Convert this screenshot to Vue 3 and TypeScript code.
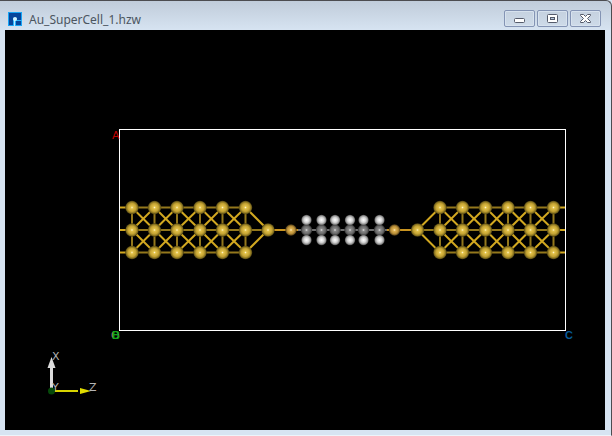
<script setup lang="ts">
interface Point { x: number; y: number }
interface Bond { from: Point; to: Point; tone: string }
interface Atom extends Point { r: number; kind: string }

const title = 'Au_SuperCell_1.hzw'
const rows = [207.5, 230, 252.5]
const blocks = [
  [132, 154.5, 177, 200, 222.5, 245.5],
  [440, 462.5, 485.5, 508, 530.5, 553.5],
]
const chain = [306.5, 321.5, 335, 350, 363.5, 379.5]

const bonds: Bond[] = []
const link = (x1: number, y1: number, x2: number, y2: number, tone: string) =>
  bonds.push({ from: { x: x1, y: y1 }, to: { x: x2, y: y2 }, tone })

for (const columns of blocks) {
  for (let i = 0; i < columns.length; i++) {
    const x = columns[i]
    link(x, rows[0], x, rows[2], 'dark')
    if (i === columns.length - 1) continue
    const next = columns[i + 1]
    for (const y of rows) link(x, y, next, y, 'dark')
    for (let r = 0; r < 2; r++) {
      link(x, rows[r], next, rows[r + 1], 'bright')
      link(x, rows[r + 1], next, rows[r], 'bright')
    }
  }
}
for (const y of rows) {
  link(120, y, 132, y, 'bright')
  link(553.5, y, 565, y, 'bright')
}
for (const y of [rows[0], rows[2]]) {
  link(245.5, y, 268, 230, 'bright')
  link(440, y, 417.5, 230, 'bright')
}
link(245.5, 230, 268, 230, 'dark')
link(417.5, 230, 440, 230, 'dark')
link(268, 230, 298, 230, 'amber')
link(387, 230, 417.5, 230, 'amber')
link(298, 230, 387, 230, 'grey')
for (const x of chain) link(x, 220, x, 240, 'pale')

const atoms: Atom[] = [
  ...blocks.flatMap((columns) =>
    columns.flatMap((x) => rows.map((y) => ({ x, y, r: 6.7, kind: 'gold' }))),
  ),
  { x: 268, y: 230, r: 6.7, kind: 'gold' },
  { x: 417.5, y: 230, r: 6.7, kind: 'gold' },
  { x: 291, y: 230, r: 5.7, kind: 'sulfur' },
  { x: 394.5, y: 230, r: 5.7, kind: 'sulfur' },
  ...chain.map((x) => ({ x, y: 230, r: 5.7, kind: 'carbon' })),
  ...chain.flatMap((x) => [220, 240].map((y) => ({ x, y, r: 5.2, kind: 'hydrogen' }))),
]
</script>

<template>
  <main class="window">
    <header class="titlebar">
      <svg class="logo" viewBox="0 0 14 14" aria-hidden="true">
        <rect width="14" height="14" fill="#18a5f5" />
        <rect x="1" y="1" width="12" height="12" fill="#07469b" />
        <path d="M5 14V6h4v2h5v1H8v5z" fill="#28b3fb" />
        <path d="M6 14V8h1v6z" fill="#bfeaff" />
        <circle cx="7" cy="7" r="2" fill="#d4f5ff" />
      </svg>
      <h1 class="title">{{ title }}</h1>
      <div class="controls">
        <button type="button" class="control" aria-label="Minimize">
          <svg viewBox="0 0 15 11" aria-hidden="true">
            <rect x="2.5" y="5.5" width="10" height="4" rx="1" fill="#fff" stroke="#555b6b" />
          </svg>
        </button>
        <button type="button" class="control" aria-label="Maximize">
          <svg viewBox="0 0 15 11" aria-hidden="true">
            <rect x="2.5" y="1.5" width="10" height="8" rx="1" fill="#fff" stroke="#555b6b" />
            <rect x="5.5" y="4.5" width="4" height="2" fill="#b8c8dd" stroke="#555b6b" />
          </svg>
        </button>
        <button type="button" class="control" aria-label="Close">
          <svg viewBox="0 0 15 11" aria-hidden="true">
            <path
              d="M2.5 1.5h3l2 2 2-2h3v1l-3 3 3 3v1h-3l-2-2-2 2h-3v-1l3-3-3-3z"
              fill="#fff" stroke="#555b6b" stroke-linejoin="round"
            />
          </svg>
        </button>
      </div>
    </header>

    <section class="viewport">
      <svg class="scene" viewBox="5 30 600 400" role="img" aria-label="Molecular junction">
        <defs>
          <radialGradient id="gold">
            <stop offset="0" stop-color="#fff4cc" />
            <stop offset="0.2" stop-color="#e2c24a" />
            <stop offset="0.6" stop-color="#c4a232" />
            <stop offset="0.85" stop-color="#84701f" />
            <stop offset="1" stop-color="#463a10" />
          </radialGradient>
          <radialGradient id="sulfur">
            <stop offset="0" stop-color="#ffeec8" />
            <stop offset="0.25" stop-color="#deb250" />
            <stop offset="0.65" stop-color="#b98e38" />
            <stop offset="1" stop-color="#4a3814" />
          </radialGradient>
          <radialGradient id="carbon">
            <stop offset="0" stop-color="#e8e8e8" />
            <stop offset="0.25" stop-color="#8a8a8a" />
            <stop offset="0.7" stop-color="#666666" />
            <stop offset="1" stop-color="#2c2c2c" />
          </radialGradient>
          <radialGradient id="hydrogen">
            <stop offset="0" stop-color="#ffffff" />
            <stop offset="0.5" stop-color="#d2d2d2" />
            <stop offset="0.8" stop-color="#949494" />
            <stop offset="1" stop-color="#484848" />
          </radialGradient>
        </defs>

        <rect class="cell" x="119.5" y="129.5" width="446" height="201" />

        <line
          v-for="(bond, i) in bonds" :key="`bond-${i}`" class="bond" :class="bond.tone"
          :x1="bond.from.x" :y1="bond.from.y" :x2="bond.to.x" :y2="bond.to.y"
        />
        <circle
          v-for="(atom, i) in atoms" :key="`atom-${i}`"
          :cx="atom.x" :cy="atom.y" :r="atom.r" :fill="`url(#${atom.kind})`"
        />

        <text class="label a" x="112" y="139">A</text>
        <text class="label origin" x="111" y="339">O</text>
        <text class="label b" x="112" y="339">B</text>
        <text class="label c" x="565" y="339">C</text>

        <path d="M51.5 390V368" stroke="#dcdcdc" stroke-width="3" />
        <path d="M51.5 357l4 11h-8z" fill="#dcdcdc" />
        <path d="M52 391h26" stroke="#d8d400" stroke-width="2" />
        <path d="M80 388l11 3-11 3z" fill="#e0dc00" />
        <text class="label axis" x="52" y="360">X</text>
        <text class="label axis" x="52" y="391">Y</text>
        <text class="label axis" x="89" y="391">Z</text>
        <circle cx="51.5" cy="391" r="3.5" fill="#064a0a" />
      </svg>
    </section>
  </main>
</template>

<style>
body {
  background: #d9e5f2;
}
</style>

<style scoped>
.window {
  box-sizing: border-box;
  display: flex;
  flex-direction: column;
  min-height: 100vh;
  padding: 0 6px 5px 5px;
  border-top: 1px solid #4c4c50;
  border-right: 1px solid #4c4c50;
  border-bottom: 1px solid #eef4fa;
  border-top-right-radius: 6px;
  background: linear-gradient(#c0ccda, #d7e4f2 30px);
}

.titlebar {
  display: flex;
  align-items: center;
  height: 29px;
  padding: 0 4px 0 3px;
  box-sizing: border-box;
}

.logo {
  width: 14px;
  height: 14px;
  margin-top: 7px;
}

.title {
  flex: 1;
  margin: 8px 0 0 7px;
  font: 400 12px/16px "Noto Sans", sans-serif;
  color: #4b5560;
}

.controls {
  display: flex;
  gap: 2px;
}

.control {
  display: flex;
  align-items: center;
  justify-content: center;
  box-sizing: border-box;
  width: 31px;
  height: 17px;
  margin-top: 6px;
  padding: 0;
  border: 1px solid #8494b4;
  border-radius: 2px;
  background: linear-gradient(#c5d1df, #cedbe9);
  box-shadow: inset 0 0 0 1px #d7e2ee;
}

.control svg {
  width: 15px;
  height: 11px;
}

.viewport {
  flex: 1;
  display: flex;
  background: #000;
}

.scene {
  display: block;
  width: 100%;
}

.cell {
  fill: none;
  stroke: #fff;
  stroke-width: 1;
}

.bond {
  stroke-width: 2;
}

.dark {
  stroke: #94781c;
}

.bright {
  stroke: #d2a820;
}

.amber {
  stroke: #c99420;
}

.grey {
  stroke: #707070;
}

.pale {
  stroke: #b0b0b0;
}

.label {
  font: 11px "DejaVu Sans", sans-serif;
}

.a {
  fill: #c00000;
}

.origin {
  fill: #909090;
}

.b {
  font: bold 11px "Liberation Sans", sans-serif;
  fill: #10a818;
}

.c {
  font: bold 11px "Liberation Sans", sans-serif;
  fill: #075a98;
}

.axis {
  fill: #b4b4b4;
}
</style>
